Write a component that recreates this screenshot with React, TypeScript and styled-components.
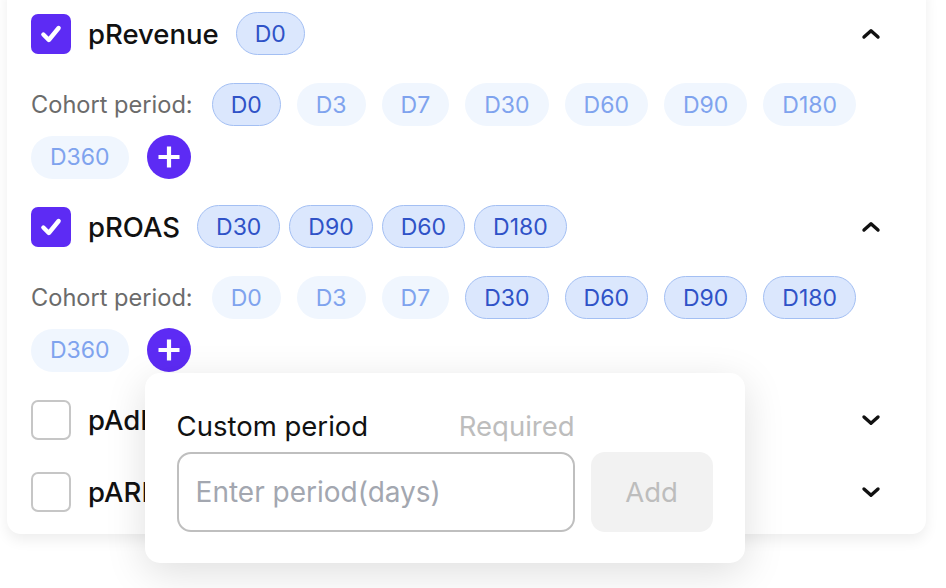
import React, { useState } from 'react';
import styled, { createGlobalStyle } from 'styled-components';

const GlobalStyle = createGlobalStyle`
  html, body {
    margin: 0;
    padding: 0;
    background: #ffffff;
    font-family: Inter, "Noto Sans", sans-serif;
  }
  body { min-height: 100vh; overflow: hidden; }
  * { box-sizing: border-box; }
`;

const Page = styled.div`
  width: 919px;
  margin-left: 7px;
`;

const Card = styled.div`
  margin-top: -20px;
  padding: 32px 43px 18px 24px;
  background: #fff;
  border-radius: 14px;
  box-shadow: 0 6px 14px rgba(0, 0, 0, 0.07);
  display: flex;
  flex-direction: column;
  gap: 26px;
`;

const Section = styled.div<{ $open: boolean }>`
  display: flex;
  flex-direction: column;
  gap: 28px;
  padding-bottom: ${p => (p.$open ? 0 : 3)}px;
`;

const Header = styled.div`
  display: flex;
  align-items: center;
  height: 43px;
  gap: 9px;
`;

const Box = styled.div<{ $checked: boolean }>`
  width: 40px;
  height: 40px;
  border-radius: 7px;
  flex-shrink: 0;
  margin-right: 8px;
  display: flex;
  align-items: center;
  justify-content: center;
  background: ${p => (p.$checked ? '#5d2bf4' : '#fff')};
  border: ${p => (p.$checked ? 'none' : '2px solid #c6c6c6')};
`;

const Title = styled.span`
  font-size: 27.5px;
  font-weight: 500;
  color: #111;
  margin-right: 8px;
  white-space: nowrap;
`;

const Chevron = styled.div`
  margin-left: auto;
  width: 24px;
  height: 24px;
  display: flex;
  align-items: center;
  justify-content: center;
`;

const Cohort = styled.div`
  display: flex;
  flex-wrap: wrap;
  align-items: center;
  column-gap: 16px;
  row-gap: 9px;
`;

const CohortLabel = styled.span`
  font-size: 23.6px;
  color: #6b6b6b;
  margin-right: 3px;
  white-space: nowrap;
`;

const Chip = styled.span<{ $on: boolean }>`
  height: 43px;
  padding: 0 18px;
  border-radius: 22px;
  display: inline-flex;
  align-items: center;
  font-size: 23px;
  border: 1.5px solid ${p => (p.$on ? '#a3bff3' : 'transparent')};
  background: ${p => (p.$on ? '#dbe7fd' : '#f0f6fe')};
  color: ${p => (p.$on ? '#2f52c7' : '#7fa3ee')};
`;

const PlusWrap = styled.div`
  position: relative;
  margin-left: 2px;
`;

const PlusButton = styled.button`
  width: 44px;
  height: 44px;
  border-radius: 50%;
  border: none;
  padding: 0;
  background: #5d2bf4;
  display: flex;
  align-items: center;
  justify-content: center;
`;

const Popover = styled.div`
  position: absolute;
  top: calc(100% + 1px);
  left: -2px;
  width: 600px;
  z-index: 10;
  background: #fff;
  border-radius: 15px;
  box-shadow: 0 10px 40px rgba(0, 0, 0, 0.13);
  padding: 37px 32px 31px;
  display: flex;
  gap: 16px;
  align-items: flex-end;
`;

const Field = styled.div`
  display: flex;
  flex-direction: column;
  gap: 10px;
  width: 398px;
`;

const FieldLabel = styled.div`
  display: flex;
  justify-content: space-between;
  font-size: 27.5px;
  line-height: 32px;
  color: #111;
`;

const Hint = styled.span`
  color: #bdbdbd;
`;

const Input = styled.input`
  height: 80px;
  border: 2px solid #bfbfbf;
  border-radius: 14px;
  padding: 0 17px;
  font-family: inherit;
  font-size: 28px;
  color: #111;
  outline: none;
  &::placeholder { color: #a3a7b0; }
`;

const AddButton = styled.button`
  width: 122px;
  height: 80px;
  border: none;
  border-radius: 14px;
  background: #f2f2f2;
  color: #bdbdbd;
  font-family: inherit;
  font-size: 27.5px;
`;

const Check = () => (
  <svg width="24" height="24" viewBox="0 0 22 22">
    <path d="M4 11.5 L9 16.5 L18 5.5" fill="none" stroke="#fff" strokeWidth="4" strokeLinecap="round" strokeLinejoin="round" />
  </svg>
);

const ChevronIcon = ({ up }: { up: boolean }) => (
  <svg width="20" height="20" viewBox="0 0 20 20">
    <path
      d={up ? 'M3 13 L10 6.8 L17 13' : 'M3 7 L10 13.2 L17 7'}
      fill="none"
      stroke="#111"
      strokeWidth="3.4"
      strokeLinecap="round"
      strokeLinejoin="round"
    />
  </svg>
);

const Plus = () => (
  <svg width="24" height="24" viewBox="0 0 24 24">
    <path d="M12 1.5 V22.5 M1.5 12 H22.5" stroke="#fff" strokeWidth="4.2" />
  </svg>
);

const periods = ['D0', 'D3', 'D7', 'D30', 'D60', 'D90', 'D180', 'D360'];

type Metric = {
  name: string;
  checked: boolean;
  open: boolean;
  selected: string[];
  popover?: boolean;
};

const metrics: Metric[] = [
  { name: 'pRevenue', checked: true, open: true, selected: ['D0'] },
  { name: 'pROAS', checked: true, open: true, selected: ['D30', 'D90', 'D60', 'D180'], popover: true },
  { name: 'pAdRevenue', checked: false, open: false, selected: [] },
  { name: 'pARPU', checked: false, open: false, selected: [] },
];

const MetricSection = ({ metric }: { metric: Metric }) => (
  <Section $open={metric.open}>
    <Header>
      <Box $checked={metric.checked}>{metric.checked && <Check />}</Box>
      <Title>{metric.name}</Title>
      {metric.selected.map(s => (
        <Chip key={s} $on>{s}</Chip>
      ))}
      <Chevron>
        <ChevronIcon up={metric.open} />
      </Chevron>
    </Header>
    {metric.open && (
      <Cohort>
        <CohortLabel>Cohort period:</CohortLabel>
        {periods.map(p => (
          <Chip key={p} $on={metric.selected.includes(p)}>{p}</Chip>
        ))}
        <PlusWrap>
          <PlusButton>
            <Plus />
          </PlusButton>
          {metric.popover && <CustomPeriod />}
        </PlusWrap>
      </Cohort>
    )}
  </Section>
);

const CustomPeriod = () => {
  const [value, setValue] = useState('');
  return (
    <Popover>
      <Field>
        <FieldLabel>
          <span>Custom period</span>
          <Hint>Required</Hint>
        </FieldLabel>
        <Input
          placeholder="Enter period(days)"
          value={value}
          onChange={e => setValue(e.target.value)}
        />
      </Field>
      <AddButton>Add</AddButton>
    </Popover>
  );
};

export default function App() {
  return (
    <Page>
      <GlobalStyle />
      <Card>
        {metrics.map(m => (
          <MetricSection key={m.name} metric={m} />
        ))}
      </Card>
    </Page>
  );
}
